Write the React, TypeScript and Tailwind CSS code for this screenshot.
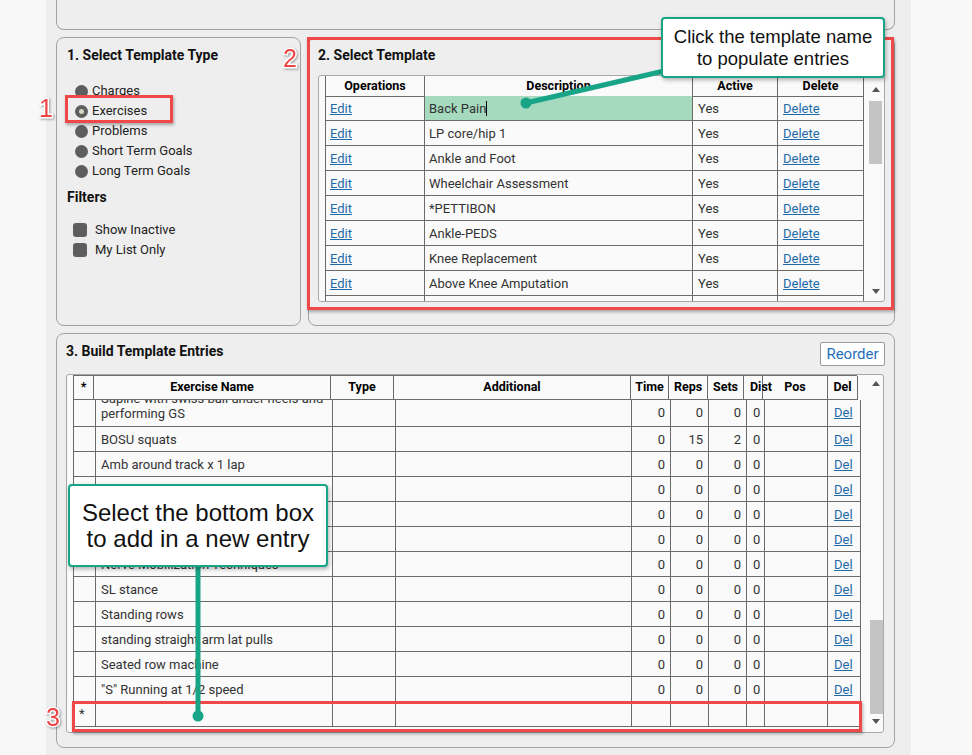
import React from 'react'

const templates = [
  'Back Pain',
  'LP core/hip 1',
  'Ankle and Foot',
  'Wheelchair Assessment',
  '*PETTIBON',
  'Ankle-PEDS',
  'Knee Replacement',
  'Above Knee Amputation',
  'Shoulder Impingement',
]

interface Entry {
  name: string
  time: number
  reps: number
  sets: number
  dist: number
}

const entries: Entry[] = [
  { name: 'BOSU squats', time: 0, reps: 15, sets: 2, dist: 0 },
  { name: 'Amb around track x 1 lap', time: 0, reps: 0, sets: 0, dist: 0 },
  { name: 'Sit to stand', time: 0, reps: 0, sets: 0, dist: 0 },
  { name: 'Lateral step ups', time: 0, reps: 0, sets: 0, dist: 0 },
  { name: 'Hamstring curls', time: 0, reps: 0, sets: 0, dist: 0 },
  { name: 'Nerve Mobilization Techniques', time: 0, reps: 0, sets: 0, dist: 0 },
  { name: 'SL stance', time: 0, reps: 0, sets: 0, dist: 0 },
  { name: 'Standing rows', time: 0, reps: 0, sets: 0, dist: 0 },
  { name: 'standing straight arm lat pulls', time: 0, reps: 0, sets: 0, dist: 0 },
  { name: 'Seated row machine', time: 0, reps: 0, sets: 0, dist: 0 },
  { name: '"S" Running at 1/2 speed', time: 0, reps: 0, sets: 0, dist: 0 },
]

const cell = 'border-r border-b border-[#6b6b6b] flex items-center overflow-hidden whitespace-nowrap'
const hcell = 'border-r border-b border-[#6b6b6b] flex items-center justify-center font-bold text-[12.5px] text-black whitespace-nowrap'
const link = 'text-[#1f6aa8] underline'

function UpArrow() {
  return <div className="mx-auto w-0 h-0 border-x-[4px] border-x-transparent border-b-[5px] border-b-[#555]" />
}

function DownArrow() {
  return <div className="mx-auto w-0 h-0 border-x-[4px] border-x-transparent border-t-[5px] border-t-[#555]" />
}

function RedNumber({ n, className }: { n: string; className: string }) {
  return (
    <div
      className={`absolute text-[25px] leading-none text-[#ec4545] font-['Liberation_Sans',Arial,sans-serif] [-webkit-text-stroke:3px_white] [paint-order:stroke_fill] drop-shadow-[1px_1px_1px_rgba(0,0,0,0.35)] ${className}`}
    >
      {n}
    </div>
  )
}

function TypePanel() {
  const types = ['Charges', 'Exercises', 'Problems', 'Short Term Goals', 'Long Term Goals']
  return (
    <div className="w-[245px] shrink-0 rounded-[8px] border border-[#a2a2a2] pl-[10px] pt-[9px]">
      <div className="text-[14px] leading-[17px] font-bold text-[#111]">1. Select Template Type</div>
      <div className="mt-[17px] flex flex-col">
        {types.map((t) => (
          <div key={t} className="h-[20px] flex items-center gap-[4px] ml-[8px] text-[13px] text-[#222]">
            <span className="w-[13px] h-[13px] rounded-full bg-[#5e5e5e] flex items-center justify-center">
              {t === 'Exercises' && <span className="w-[5px] h-[5px] rounded-full bg-[#d9d6c2]" />}
            </span>
            {t}
          </div>
        ))}
      </div>
      <div className="mt-[8px] text-[14px] leading-[17px] font-bold text-[#111]">Filters</div>
      <div className="mt-[14px] flex flex-col">
        {['Show Inactive', 'My List Only'].map((t) => (
          <div key={t} className="h-[20px] flex items-center gap-[8px] ml-[6px] text-[13px] text-[#222]">
            <span className="w-[14px] h-[14px] rounded-[3px] bg-[#5e5e5e]" />
            {t}
          </div>
        ))}
      </div>
    </div>
  )
}

function TemplatePanel() {
  const cols = 'grid grid-cols-[99px_268px_85px_86px]'
  return (
    <div className="flex-1 rounded-[8px] border border-[#a2a2a2] pl-[9px] pr-[9px] pt-[9px]">
      <div className="text-[14px] leading-[17px] font-bold text-[#111]">2. Select Template</div>
      <div className="mt-[11px] h-[227px] w-[567px] rounded-[3px] border border-[#a8a8a8] bg-[#fafafa] flex overflow-hidden">
        <div className="ml-[6px] w-[538px] shrink-0">
          <div className={`${cols} h-[20px] border-l border-[#6b6b6b]`}>
            {['Operations', 'Description', 'Active', 'Delete'].map((h) => (
              <div key={h} className={`${hcell} items-start pt-[1px]`}>{h}</div>
            ))}
          </div>
          {templates.map((t, i) => (
            <div key={t} className={`${cols} h-[25px] border-l border-[#6b6b6b] text-[13px] text-[#333]`}>
              <div className={`${cell} pl-[4px] pt-[1px]`}><span className={link}>Edit</span></div>
              <div className={`${cell} pl-[4px] pt-[1px] ${i === 0 ? 'bg-[#a6dabe]' : ''}`}>
                {t}
                {i === 0 && <span className="inline-block w-[1px] h-[15px] bg-black" />}
              </div>
              <div className={`${cell} pl-[5px] pt-[1px]`}>Yes</div>
              <div className={`${cell} pl-[5px] pt-[1px]`}><span className={link}>Delete</span></div>
            </div>
          ))}
        </div>
        <div className="ml-[5px] w-[15px] flex flex-col pt-[11px] pb-[7px]">
          <UpArrow />
          <div className="mt-[9px] h-[63px] w-[13px] mx-auto bg-[#c4c4c4]" />
          <div className="flex-1" />
          <DownArrow />
        </div>
      </div>
    </div>
  )
}

function EntriesPanel() {
  const dataCols = 'grid grid-cols-[22px_237px_63px_236px_39px_38px_38px_18px_63px_33px]'
  const headCols = 'grid grid-cols-[20px_237px_63px_237px_38px_39px_36px_19px_65px_30px]'
  const numCell = `${cell} justify-end pr-[5px] pt-[1px]`
  return (
    <div className="mt-[7px] h-[415px] rounded-[8px] border border-[#a2a2a2] pl-[9px] pr-[10px] pt-[8px]">
      <div className="flex items-start justify-between">
        <div className="mt-[1px] text-[14px] leading-[17px] font-bold text-[#111]">3. Build Template Entries</div>
        <button className="h-[24px] w-[65px] mr-[-1px] rounded-[2px] border border-[#9a9a9a] bg-white text-[15px] text-[#1f6fbd]">
          Reorder
        </button>
      </div>
      <div className="mt-[8px] h-[359px] rounded-[3px] border border-[#a8a8a8] bg-[#fafafa] flex overflow-hidden">
        <div className="ml-[6px] w-[788px] shrink-0">
          <div className={`${headCols} h-[25px] w-[784px] border-l border-t border-[#6b6b6b]`}>
            <div className={hcell}>*</div>
            <div className={hcell}>Exercise Name</div>
            <div className={hcell}>Type</div>
            <div className={hcell}>Additional</div>
            <div className={hcell}>Time</div>
            <div className={hcell}>Reps</div>
            <div className={hcell}>Sets</div>
            <div className={`${hcell} justify-start pl-[6px] overflow-visible`}>Dist</div>
            <div className={hcell}>Pos</div>
            <div className={hcell}>Del</div>
          </div>
          <div className={`${dataCols} h-[27px] border-l border-[#6b6b6b] text-[13px] text-[#333]`}>
            <div className={cell} />
            <div className="border-r border-b border-[#6b6b6b] overflow-hidden flex flex-col justify-end pb-[5px] pl-[5px] leading-[15px]">
              <div className="whitespace-nowrap">Supine with swiss ball under heels and</div>
              <div>performing GS</div>
            </div>
            <div className={cell} />
            <div className={cell} />
            <div className={`${numCell} items-start pt-[3px]`}>0</div>
            <div className={`${numCell} items-start pt-[3px]`}>0</div>
            <div className={`${numCell} items-start pt-[3px]`}>0</div>
            <div className={`${cell} items-start pt-[3px] pl-[6px]`}>0</div>
            <div className={cell} />
            <div className={`${cell} items-start pt-[3px] pl-[6px]`}><span className={link}>Del</span></div>
          </div>
          {entries.map((e) => (
            <div key={e.name} className={`${dataCols} h-[25px] border-l border-[#6b6b6b] text-[13px] text-[#333]`}>
              <div className={cell} />
              <div className={`${cell} pl-[5px] pt-[1px]`}>{e.name}</div>
              <div className={cell} />
              <div className={cell} />
              <div className={numCell}>{e.time}</div>
              <div className={numCell}>{e.reps}</div>
              <div className={numCell}>{e.sets}</div>
              <div className={`${cell} pl-[6px] pt-[1px]`}>{e.dist}</div>
              <div className={cell} />
              <div className={`${cell} pl-[6px] pt-[1px]`}><span className={link}>Del</span></div>
            </div>
          ))}
          <div className={`${dataCols} h-[25px] border-l border-[#6b6b6b] text-[13px] text-[#333]`}>
            <div className={`${cell} pl-[5px]`}>*</div>
            {Array.from({ length: 9 }).map((_, i) => (
              <div key={i} className={cell} />
            ))}
          </div>
        </div>
        <div className="ml-[8px] w-[14px] flex flex-col pt-[6px] pb-[8px]">
          <UpArrow />
          <div className="flex-1" />
          <div className="h-[94px] w-[13px] mx-auto bg-[#c4c4c4]" />
          <div className="mt-[5px]">
            <DownArrow />
          </div>
        </div>
      </div>
    </div>
  )
}

export default function App() {
  return (
    <div className="relative w-[972px] h-[755px] overflow-hidden bg-[#f8f8f8] font-['Roboto','Liberation_Sans',sans-serif]">
      <div className="ml-[46px] w-[865px] h-full bg-[#eeeeee] pl-[10px] pr-[16px]">
        <div className="h-[30px] rounded-b-[8px] border-x border-b border-[#a2a2a2] overflow-hidden">
          <div className="-mt-[16px] pl-[34px] text-[13px] leading-[16px] text-[#222] whitespace-nowrap">
            Templates help you quickly apply <span className="text-[#1f6fbd]">charges</span>, exercises,{' '}
            <span className="text-[#e08a00]">goals</span> and problems — set up <span className="text-[#e08a00]">typing</span> once
          </div>
        </div>
        <div className="mt-[7px] flex gap-[7px] h-[289px]">
          <TypePanel />
          <TemplatePanel />
        </div>
        <EntriesPanel />
      </div>

      {/* annotation overlays */}
      <div className="absolute left-[65px] top-[95px] w-[108px] h-[28px] border-[3px] border-[#f04848] shadow-[1px_2px_3px_rgba(0,0,0,0.3)]" />
      <div className="absolute left-[307px] top-[37px] w-[587px] h-[273px] border-[3px] border-[#f04848] shadow-[1px_2px_3px_rgba(0,0,0,0.3)]" />
      <div className="absolute left-[72px] top-[701px] w-[790px] h-[31px] border-[3px] border-[#f04848] shadow-[1px_2px_3px_rgba(0,0,0,0.3)]" />

      <RedNumber n="1" className="left-[39px] top-[96px]" />
      <RedNumber n="2" className="left-[283px] top-[46px]" />
      <RedNumber n="3" className="left-[46px] top-[705px]" />

      <svg className="absolute left-0 top-0 pointer-events-none" width="972" height="755">
        <line x1="664" y1="71" x2="526" y2="103" stroke="#17a487" strokeWidth="5" strokeLinecap="round" />
        <circle cx="526" cy="103" r="5.5" fill="#17a487" />
        <line x1="198" y1="560" x2="198" y2="716" stroke="#17a487" strokeWidth="5" />
        <circle cx="198" cy="716" r="5.5" fill="#17a487" />
      </svg>

      <div className="absolute left-[661px] top-[17px] w-[224px] h-[61px] rounded-[4px] border-2 border-[#17a487] bg-white shadow-[1px_2px_4px_rgba(0,0,0,0.3)] flex flex-col items-center justify-center text-[18.5px] leading-[22px] text-[#111] font-['Liberation_Sans',Arial,sans-serif]">
        <div>Click the template name</div>
        <div>to populate entries</div>
      </div>
      <div className="absolute left-[68px] top-[484px] w-[260px] h-[83px] rounded-[4px] border-2 border-[#17a487] bg-white shadow-[1px_2px_4px_rgba(0,0,0,0.3)] flex flex-col items-center justify-center text-[24px] leading-[26px] text-[#111] font-['Liberation_Sans',Arial,sans-serif]">
        <div>Select the bottom box</div>
        <div>to add in a new entry</div>
      </div>
    </div>
  )
}
